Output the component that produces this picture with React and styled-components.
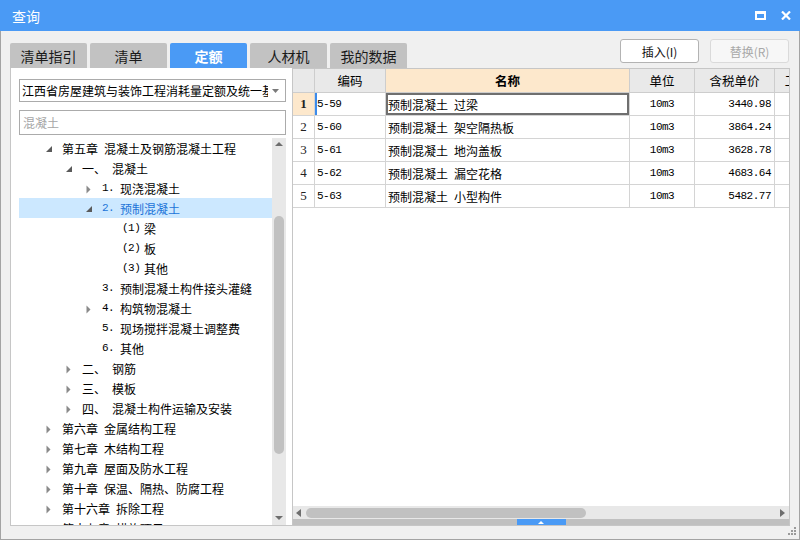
import React from "react";
import styled, { createGlobalStyle } from "styled-components";

const GlobalStyle = createGlobalStyle`
  html, body { margin: 0; padding: 0; overflow: hidden; background: #f0f0f0; }
  * { box-sizing: border-box; }
`;

const CJK = `"Noto Sans CJK SC", "Noto Sans", sans-serif`;
const MONO = `"Liberation Mono", "DejaVu Sans Mono", monospace`;

const Window = styled.div`
  position: relative;
  width: 800px;
  height: 540px;
  display: flex;
  flex-direction: column;
  background: #f0f0f0;
  border-left: 1px solid #a3a3a3;
  border-right: 1px solid #a3a3a3;
  border-bottom: 1px solid #a3a3a3;
  font-family: ${CJK};
  color: #000;
`;

const TitleBar = styled.div`
  height: 31px;
  flex: none;
  margin: 0 -1px;
  background: #4a9af5;
  color: #fff;
  display: flex;
  align-items: center;
  padding: 0 9px 0 12px;
  font-size: 14px;
`;

const Title = styled.div`
  flex: 1;
`;

const TitleButtons = styled.div`
  display: flex;
  align-items: center;
  gap: 15px;
`;

const Body = styled.div`
  flex: none;
  padding: 8px 9px 0 9px;
  display: flex;
  flex-direction: column;
`;

const TopRow = styled.div`
  height: 29px;
  display: flex;
  align-items: flex-end;
`;

const Tabs = styled.div`
  display: flex;
  gap: 3px;
  align-items: flex-end;
`;

const Tab = styled.div`
  width: 77px;
  height: 25px;
  border-radius: 2px 2px 0 0;
  background: ${(p) => (p.$active ? "#4a9af5" : "#c2c2c2")};
  color: ${(p) => (p.$active ? "#fff" : "#1a1a1a")};
  font-weight: ${(p) => (p.$active ? 700 : 400)};
  font-size: 14px;
  display: flex;
  align-items: center;
  justify-content: center;
`;

const Buttons = styled.div`
  margin-left: auto;
  align-self: flex-start;
  display: flex;
  gap: 11px;
  margin-right: 1px;
`;

const Button = styled.div`
  width: 79px;
  height: 24px;
  border-radius: 3px;
  border: 1px solid ${(p) => (p.$disabled ? "#dadada" : "#b3b3b3")};
  background: ${(p) => (p.$disabled ? "#f7f7f7" : "#fff")};
  color: ${(p) => (p.$disabled ? "#a8a8a8" : "#111")};
  font-size: 12px;
  display: flex;
  align-items: center;
  justify-content: center;
`;

const Panels = styled.div`
  height: 458px;
  display: flex;
`;

const LeftPanel = styled.div`
  width: 282px;
  flex: none;
  background: #fff;
  border-left: 1px solid #c6c6c6;
  border-bottom: 1px solid #c6c6c6;
  padding: 11px 6px 0 8px;
  display: flex;
  flex-direction: column;
`;

const Combo = styled.div`
  height: 23px;
  border: 1px solid #ababab;
  display: flex;
  align-items: center;
  padding: 0 6px 0 2px;
  font-size: 12px;
`;

const ComboText = styled.div`
  flex: 1;
  overflow: hidden;
  white-space: nowrap;
  margin-right: 4px;
`;

const SearchBox = styled.div`
  height: 25px;
  margin-top: 8px;
  border: 1px solid #ababab;
  display: flex;
  align-items: center;
  padding-left: 3px;
  font-size: 12px;
  color: #a6a6a6;
`;

const TreeArea = styled.div`
  margin-top: 3px;
  flex: 1;
  display: flex;
  overflow: hidden;
`;

const TreeList = styled.div`
  flex: 1;
  overflow: hidden;
`;

const TreeRow = styled.div`
  height: 20px;
  display: flex;
  align-items: center;
  padding-left: ${(p) => 27 + p.$level * 20}px;
  background: ${(p) => (p.$selected ? "#cce8ff" : "transparent")};
  color: ${(p) => (p.$selected ? "#1c74d8" : "#000")};
  font-size: 12px;
  white-space: nowrap;
`;

const ArrowSlot = styled.div`
  width: 16px;
  height: 20px;
  flex: none;
  display: flex;
  align-items: center;
  padding-top: 2px;
`;

const Prefix = styled.span`
  display: inline-block;
  width: ${(p) => p.$w}px;
  flex: none;
  font-family: ${(p) => (p.$mono ? MONO : CJK)};
  font-size: ${(p) => (p.$mono ? "11px" : "12px")};
  letter-spacing: ${(p) => (p.$mono ? "-0.5px" : "0")};
`;

const VScroll = styled.div`
  width: 14px;
  flex: none;
  background: #e8e8e8;
  display: flex;
  flex-direction: column;
  align-items: center;
`;

const ScrollArrow = styled.div`
  height: ${(p) => p.$h}px;
  display: flex;
  align-items: center;
  justify-content: center;
  flex: none;
`;

const VThumb = styled.div`
  width: 10px;
  height: 238px;
  margin-top: 66px;
  border-radius: 5px;
  background: #c1c1c1;
`;

const Spacer = styled.div`
  flex: 1;
`;

const RightPanel = styled.div`
  width: 498px;
  flex: none;
  background: #fff;
  border: 1px solid #c6c6c6;
  display: flex;
  flex-direction: column;
`;

const Grid = styled.div`
  flex: 1;
  overflow: hidden;
`;

const GridRow = styled.div`
  display: grid;
  grid-template-columns: 22px 71px 244px 65px 80px 58px;
  height: ${(p) => (p.$header ? 24 : 23)}px;
`;

const HeadCell = styled.div`
  background: ${(p) => (p.$hot ? "#fde8cc" : "#e9e9e9")};
  border-right: 1px solid #cdcdcd;
  border-bottom: 1px solid #cdcdcd;
  font-size: 12.5px;
  font-weight: ${(p) => (p.$hot ? 700 : 400)};
  display: flex;
  align-items: center;
  justify-content: center;
  white-space: nowrap;
  overflow: hidden;
`;

const NumCell = styled.div`
  background: ${(p) => (p.$current ? "#fde8cc" : "#fff")};
  border-right: 1px solid #d4d4d4;
  border-bottom: 1px solid #d4d4d4;
  font-family: "Liberation Serif", serif;
  font-size: 13px;
  font-weight: ${(p) => (p.$current ? 700 : 400)};
  color: #222;
  display: flex;
  align-items: center;
  justify-content: center;
`;

const Cell = styled.div`
  border-right: 1px solid #d4d4d4;
  border-bottom: 1px solid #d4d4d4;
  display: flex;
  align-items: center;
  justify-content: ${(p) => p.$align || "flex-start"};
  padding: ${(p) => (p.$align === "flex-end" ? "0 3px 0 0" : p.$align === "center" ? "0" : "0 0 0 2px")};
  font-family: ${(p) => (p.$mono ? MONO : CJK)};
  font-size: ${(p) => (p.$mono ? "11px" : "12px")};
  letter-spacing: ${(p) => (p.$mono ? "-0.5px" : "0")};
  white-space: pre;
  overflow: hidden;
  box-shadow: ${(p) =>
    p.$focus
      ? "inset 0 0 0 2px #6f6f6f"
      : p.$marker
      ? "inset 2px 0 0 #3b8beb"
      : "none"};
`;

const HScroll = styled.div`
  height: 13px;
  flex: none;
  background: #e8e8e8;
  display: flex;
  align-items: center;
  padding: 0 4px 0 3px;
`;

const HThumb = styled.div`
  width: 280px;
  height: 10px;
  margin-left: 5px;
  border-radius: 5px;
  background: #c1c1c1;
`;

const Splitter = styled.div`
  height: 6px;
  flex: none;
  background: #c0c0c0;
  display: flex;
  justify-content: center;
`;

const SplitHandle = styled.div`
  width: 49px;
  height: 6px;
  background: #4a9af5;
  display: flex;
  align-items: center;
  justify-content: center;
`;

const Grip = styled.svg`
  position: absolute;
  right: 2px;
  bottom: 3px;
`;

const tabs = ["清单指引", "清单", "定额", "人材机", "我的数据"];

const tree = [
  { level: 0, arrow: "open", pre: "第五章", pw: 42, text: "混凝土及钢筋混凝土工程" },
  { level: 1, arrow: "open", pre: "一、", pw: 30, text: "混凝土" },
  { level: 2, arrow: "closed", pre: "1.", pw: 18, mono: true, text: "现浇混凝土" },
  { level: 2, arrow: "open", pre: "2.", pw: 18, mono: true, text: "预制混凝土", selected: true },
  { level: 3, pre: "(1)", pw: 22, mono: true, text: "梁" },
  { level: 3, pre: "(2)", pw: 22, mono: true, text: "板" },
  { level: 3, pre: "(3)", pw: 22, mono: true, text: "其他" },
  { level: 2, pre: "3.", pw: 18, mono: true, text: "预制混凝土构件接头灌缝" },
  { level: 2, arrow: "closed", pre: "4.", pw: 18, mono: true, text: "构筑物混凝土" },
  { level: 2, pre: "5.", pw: 18, mono: true, text: "现场搅拌混凝土调整费" },
  { level: 2, pre: "6.", pw: 18, mono: true, text: "其他" },
  { level: 1, arrow: "closed", pre: "二、", pw: 30, text: "钢筋" },
  { level: 1, arrow: "closed", pre: "三、", pw: 30, text: "模板" },
  { level: 1, arrow: "closed", pre: "四、", pw: 30, text: "混凝土构件运输及安装" },
  { level: 0, arrow: "closed", pre: "第六章", pw: 42, text: "金属结构工程" },
  { level: 0, arrow: "closed", pre: "第七章", pw: 42, text: "木结构工程" },
  { level: 0, arrow: "closed", pre: "第九章", pw: 42, text: "屋面及防水工程" },
  { level: 0, arrow: "closed", pre: "第十章", pw: 42, text: "保温、隔热、防腐工程" },
  { level: 0, arrow: "closed", pre: "第十六章", pw: 54, text: "拆除工程" },
  { level: 0, arrow: "closed", pre: "第十七章", pw: 54, text: "措施项目" },
];

const rows = [
  ["5-59", "预制混凝土\u2002过梁", "10m3", "3440.98"],
  ["5-60", "预制混凝土\u2002架空隔热板", "10m3", "3864.24"],
  ["5-61", "预制混凝土\u2002地沟盖板", "10m3", "3628.78"],
  ["5-62", "预制混凝土\u2002漏空花格", "10m3", "4683.64"],
  ["5-63", "预制混凝土\u2002小型构件", "10m3", "5482.77"],
];

function TreeArrow({ kind }) {
  if (kind === "open")
    return (
      <svg width="7" height="7" viewBox="0 0 7 7" style={{ marginLeft: 0 }}>
        <polygon points="6,0 6,6 0,6" fill="#5a5a5a" />
      </svg>
    );
  if (kind === "closed")
    return (
      <svg width="6" height="9" viewBox="0 0 6 9">
        <polygon points="0.5,0.5 4.5,4.5 0.5,8.5" fill="#8a8a8a" />
      </svg>
    );
  return null;
}

export default function App() {
  return (
    <>
      <GlobalStyle />
      <Window>
        <TitleBar>
          <Title>查询</Title>
          <TitleButtons>
            <svg width="11" height="9" viewBox="0 0 11 9">
              <rect x="1" y="1.5" width="9" height="6.5" fill="none" stroke="#fff" strokeWidth="2" />
              <rect x="0" y="0" width="11" height="3" fill="#fff" />
            </svg>
            <svg width="10" height="9" viewBox="0 0 10 9">
              <path d="M1 0.5 L9 8.5 M9 0.5 L1 8.5" stroke="#fff" strokeWidth="2.2" />
            </svg>
          </TitleButtons>
        </TitleBar>
        <Body>
          <TopRow>
            <Tabs>
              {tabs.map((t) => (
                <Tab key={t} $active={t === "定额"}>
                  {t}
                </Tab>
              ))}
            </Tabs>
            <Buttons>
              <Button>插入(I)</Button>
              <Button $disabled>替换(R)</Button>
            </Buttons>
          </TopRow>
          <Panels>
            <LeftPanel>
              <Combo>
                <ComboText>江西省房屋建筑与装饰工程消耗量定额及统一基价表(2017)</ComboText>
                <svg width="7" height="4" viewBox="0 0 7 4">
                  <polygon points="0,0 7,0 3.5,4" fill="#7a7a7a" />
                </svg>
              </Combo>
              <SearchBox>混凝土</SearchBox>
              <TreeArea>
                <TreeList>
                  {tree.map((n, i) => (
                    <TreeRow key={i} $level={n.level} $selected={n.selected}>
                      <ArrowSlot>
                        <TreeArrow kind={n.arrow} />
                      </ArrowSlot>
                      <Prefix $w={n.pw} $mono={n.mono}>
                        {n.pre}
                      </Prefix>
                      <span>{n.text}</span>
                    </TreeRow>
                  ))}
                </TreeList>
                <VScroll>
                  <ScrollArrow $h={12}>
                    <svg width="8" height="4" viewBox="0 0 8 4">
                      <polygon points="4,0 8,4 0,4" fill="#6e6e6e" />
                    </svg>
                  </ScrollArrow>
                  <VThumb />
                  <Spacer />
                  <ScrollArrow $h={14}>
                    <svg width="8" height="4" viewBox="0 0 8 4">
                      <polygon points="0,0 8,0 4,4" fill="#6e6e6e" />
                    </svg>
                  </ScrollArrow>
                </VScroll>
              </TreeArea>
            </LeftPanel>
            <RightPanel>
              <Grid>
                <GridRow $header>
                  <HeadCell />
                  <HeadCell>编码</HeadCell>
                  <HeadCell $hot>名称</HeadCell>
                  <HeadCell>单位</HeadCell>
                  <HeadCell>含税单价</HeadCell>
                  <HeadCell>工程量</HeadCell>
                </GridRow>
                {rows.map((r, i) => (
                  <GridRow key={r[0]}>
                    <NumCell $current={i === 0}>{i + 1}</NumCell>
                    <Cell $mono $marker={i === 0}>{r[0]}</Cell>
                    <Cell $focus={i === 0}>{r[1]}</Cell>
                    <Cell $mono $align="center">{r[2]}</Cell>
                    <Cell $mono $align="flex-end">{r[3]}</Cell>
                    <Cell />
                  </GridRow>
                ))}
              </Grid>
              <HScroll>
                <svg width="5" height="8" viewBox="0 0 5 8">
                  <polygon points="5,0 5,8 0,4" fill="#6e6e6e" />
                </svg>
                <HThumb />
                <Spacer />
                <svg width="5" height="8" viewBox="0 0 5 8">
                  <polygon points="0,0 5,4 0,8" fill="#6e6e6e" />
                </svg>
              </HScroll>
              <Splitter>
                <SplitHandle>
                  <svg width="6" height="3" viewBox="0 0 6 3">
                    <polygon points="3,0 6,3 0,3" fill="#fff" />
                  </svg>
                </SplitHandle>
              </Splitter>
            </RightPanel>
          </Panels>
        </Body>
        <Grip width="9" height="9" viewBox="0 0 9 9">
          <rect x="6" y="0" width="2" height="2" fill="#9a9a9a" />
          <rect x="3" y="3" width="2" height="2" fill="#9a9a9a" />
          <rect x="6" y="3" width="2" height="2" fill="#9a9a9a" />
          <rect x="0" y="6" width="2" height="2" fill="#9a9a9a" />
          <rect x="3" y="6" width="2" height="2" fill="#9a9a9a" />
          <rect x="6" y="6" width="2" height="2" fill="#9a9a9a" />
        </Grip>
      </Window>
    </>
  );
}
